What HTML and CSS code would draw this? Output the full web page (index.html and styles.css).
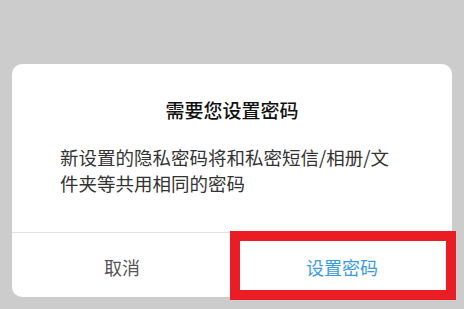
FILE: index.html
```html
<!DOCTYPE html>
<html>
<head>
<meta name="viewport" content="width=device-width, minimum-scale=1.0">
<link rel="stylesheet" href="styles.css">
</head>
<body>
<div class="screen">
  <div class="dialog">
    <div class="dialog-title">需要您设置密码</div>
    <div class="dialog-message">新设置的隐私密码将和私密短信/相册/文件夹等共用相同的密码</div>
    <div class="dialog-buttons">
      <div class="btn btn-cancel">取消</div>
      <div class="btn btn-ok">设置密码</div>
    </div>
  </div>
  <div class="highlight"></div>
</div>
</body>
</html>
```

FILE: styles.css
```css
body {
  margin: 0;
  overflow: hidden;
  background-color: #cccccc;
  font-family: "Noto Sans CJK SC", "Noto Sans", sans-serif;
}

.screen {
  position: relative;
  width: 464px;
  height: 309px;
  padding: 64px 12px 0 12px;
  box-sizing: border-box;
}

.dialog {
  background-color: #fff;
  border-radius: 10px;
  height: 233px;
  display: flex;
  flex-direction: column;
}

.dialog-title {
  padding-top: 33px;
  font-size: 19px;
  line-height: 26px;
  font-weight: 500;
  color: #111;
  text-align: center;
}

.dialog-message {
  padding: 21px 57px 0 48px;
  font-size: 18.5px;
  line-height: 26px;
  color: #333;
  height: 52px;
  border-bottom: 1px solid #e2e2e2;
  padding-bottom: 36px;
}

.dialog-buttons {
  flex: 1;
  display: flex;
}

.btn {
  flex: 1;
  display: flex;
  align-items: center;
  justify-content: center;
  font-size: 18px;
  padding-top: 3px;
}

.btn-cancel {
  color: #555;
}

.btn-ok {
  color: #3a9be0;
}

/* annotation box drawn over the confirm button */
.highlight {
  position: absolute;
  left: 230px;
  top: 231px;
  width: 206px;
  height: 49px;
  border: 10px solid #ea1c24;
}
```
